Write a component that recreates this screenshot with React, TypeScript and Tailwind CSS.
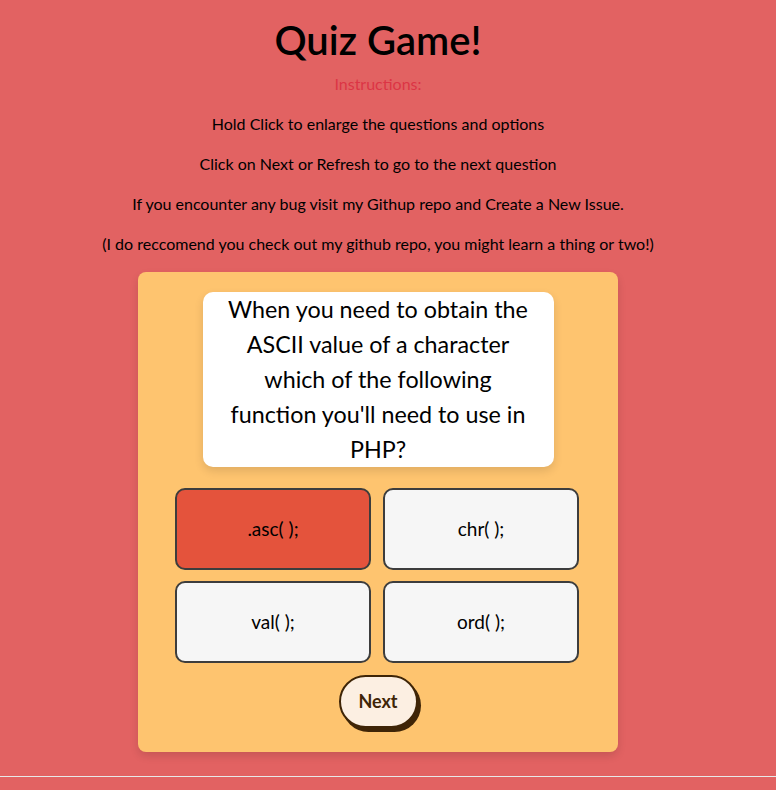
import React, { useState } from 'react';

const options = ['.asc( );', 'chr( );', 'val( );', 'ord( );'];

const instructions = [
  'Hold Click to enlarge the questions and options',
  'Click on Next or Refresh to go to the next question',
  'If you encounter any bug visit my Githup repo and Create a New Issue.',
  '(I do reccomend you check out my github repo, you might learn a thing or two!)',
];

export default function App() {
  const [picked, setPicked] = useState(0);

  return (
    <div className="min-h-[790px] bg-[#e26262] text-black" style={{ fontFamily: 'Lato, "Noto Sans", sans-serif' }}>
      <div className="flex flex-col items-center pt-4 pr-5">
        <h1 className="text-[40px] font-semibold leading-[48px]">Quiz Game!</h1>
        <div className="mt-[8px] flex flex-col items-center gap-4 text-[16px] leading-6">
          <p className="text-[#dc3545]">Instructions:</p>
          {instructions.map((line) => (
            <p key={line}>{line}</p>
          ))}
        </div>

        <div className="mt-4 flex w-[480px] flex-col items-center rounded-lg bg-[#fec46f] pt-5 pb-6 shadow-[0_4px_8px_rgba(0,0,0,0.12)]">
          <div className="w-[351px] rounded-[10px] bg-white px-5 text-center text-[23.3px] leading-[35px] shadow-[0_4px_10px_rgba(0,0,0,0.12)]">
            When you need to obtain the ASCII value of a character which of the following function you'll need to use in PHP?
          </div>

          <div className="mt-[21px] -translate-x-px grid grid-cols-[196px_196px] gap-x-3 gap-y-[11px]">
            {options.map((opt, i) => (
              <button
                key={opt}
                onClick={() => setPicked(i)}
                className={`flex h-[82px] items-center justify-center rounded-[10px] border-2 border-[#3d3d3d] text-[19px] ${
                  i === picked ? 'bg-[#e4533c]' : 'bg-[#f6f6f6]'
                }`}
              >
                {opt}
              </button>
            ))}
          </div>

          <button className="mt-3 flex h-[53px] w-[79px] items-center justify-center rounded-full border-2 border-[#3f2507] bg-[#fcefe2] text-[18px] font-bold text-[#3f2507] shadow-[3px_4px_0_#3f2507]">
            Next
          </button>
        </div>
      </div>
      <div className="mt-6 h-px bg-[#e8e8e8]" />
    </div>
  );
}
